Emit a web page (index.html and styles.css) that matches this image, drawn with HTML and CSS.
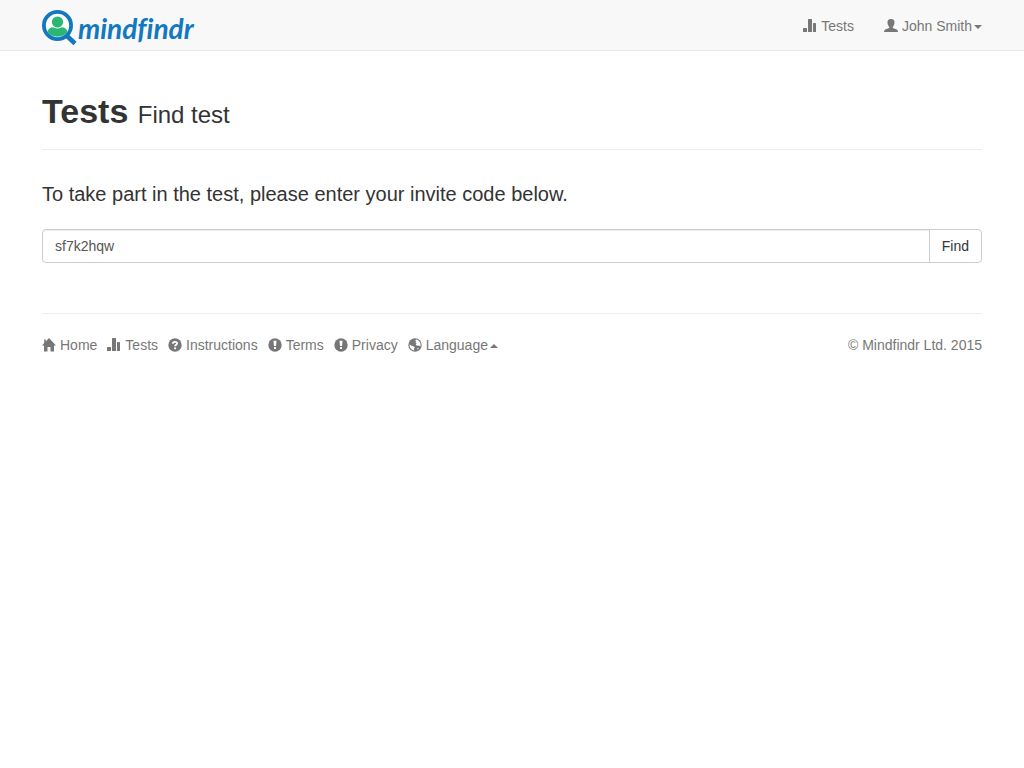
FILE: index.html
```html
<!DOCTYPE html>
<html lang="en">
<head>
<meta charset="utf-8">
<meta name="viewport" content="width=device-width, initial-scale=1">
<title>Mindfindr - Find test</title>
<link rel="stylesheet" href="styles.css">
</head>
<body>
<svg class="sprite" aria-hidden="true">
    <symbol id="icon-stats" viewBox="0 0 14 14">
        <rect x="0" y="9" width="4" height="4" rx=".5"/>
        <rect x="5" y="0" width="4" height="13" rx=".5"/>
        <rect x="10" y="4" width="3" height="9" rx=".5"/>
    </symbol>
    <symbol id="icon-user" viewBox="0 0 14 14">
        <path d="M7 0C4.3 0 3.3 1.5 3.5 3.8C3.6 5.5 4.2 6.9 5.2 7.8V9L1.2 10.4Q0 11 0 13H14Q14 11 12.8 10.4L8.8 9V7.8C9.8 6.9 10.4 5.5 10.5 3.8C10.7 1.5 9.7 0 7 0Z"/>
    </symbol>
    <symbol id="icon-home" viewBox="0 0 14 14">
        <path d="M7 0L14 7.4H12V13.5H8.5V9H5.5V13.5H2V7.4H0L2.2 5V1.5H3.8V3.4Z"/>
    </symbol>
    <symbol id="icon-question" viewBox="0 0 14 14">
        <circle cx="7" cy="7" r="6.7"/>
        <path d="M4.9 5.7C4.9 3.2 9.1 3.2 9.1 5.4C9.1 6.7 7.1 6.7 7.1 8.3" fill="none" stroke="#fff" stroke-width="1.8"/>
        <rect x="6.1" y="9.4" width="2" height="1.8" fill="#fff"/>
    </symbol>
    <symbol id="icon-exclamation" viewBox="0 0 14 14">
        <circle cx="7" cy="7" r="6.7"/>
        <path d="M5.5 2.8H8.5L8 7.9H6Z" fill="#fff"/>
        <rect x="6" y="9" width="2" height="2" fill="#fff"/>
    </symbol>
    <symbol id="icon-globe" viewBox="0 0 14 14">
        <circle cx="7" cy="7" r="6.7"/>
        <path d="M8.2 1.5L7.2 2.6L8.2 3.4L7.4 4.6L8.6 5.5L7.7 6.8L9.2 7.7L11 7.4L12.5 8.4C13.1 5 11.3 2.2 8.2 1.5Z" fill="#fff"/>
        <path d="M1.5 6.6L3.4 7.8L5.8 8.4L6.8 9.6L5.9 10.7L6.2 12.6C3.4 12.1 1.4 9.8 1.5 6.6Z" fill="#fff"/>
        <path d="M9.2 10.4L11.2 9.8L9.4 11.8Z" fill="#fff"/>
    </symbol>
</svg>

<nav class="navbar">
    <div class="container navbar-inner">
        <a class="brand" href="#">
            <svg class="brand-mark" viewBox="0 0 36 36" aria-hidden="true">
                <path d="M25 26L33 33.5" stroke="#1278bf" stroke-width="4.5"/>
                <circle cx="15.5" cy="15.5" r="13.6" fill="#fff" stroke="#1278bf" stroke-width="3.8"/>
                <circle cx="15.5" cy="12" r="5.6" fill="#2bb673"/>
                <path d="M5.5 22C5.8 18.7 8.5 17.4 11.3 17.2Q15.5 20 19.7 17.2C22.5 17.4 25.2 18.7 25.5 22Q22 26.5 15.5 26.7Q9 26.5 5.5 22Z" fill="#2bb673"/>
            </svg>
            <span class="brand-name">mindfindr</span>
        </a>
        <div class="navbar-links">
            <a class="icon-link" href="#"><svg class="icon"><use href="#icon-stats"/></svg>Tests</a>
            <a class="icon-link" href="#"><svg class="icon"><use href="#icon-user"/></svg><span>John Smith<b class="caret"></b></span></a>
        </div>
    </div>
</nav>

<main class="container">
    <header class="page-header">
        <h1>Tests <small>Find test</small></h1>
    </header>
    <form class="find-form">
        <label class="lead" for="code">To take part in the test, please enter your invite code below.</label>
        <div class="input-group">
            <input type="text" id="code" name="code" value="sf7k2hqw">
            <button type="submit">Find</button>
        </div>
    </form>
</main>

<footer class="container">
    <div class="footer-inner">
        <div class="footer-links">
            <a class="icon-link" href="#"><svg class="icon"><use href="#icon-home"/></svg>Home</a>
            <a class="icon-link" href="#"><svg class="icon"><use href="#icon-stats"/></svg>Tests</a>
            <a class="icon-link" href="#"><svg class="icon"><use href="#icon-question"/></svg>Instructions</a>
            <a class="icon-link" href="#"><svg class="icon"><use href="#icon-exclamation"/></svg>Terms</a>
            <a class="icon-link" href="#"><svg class="icon"><use href="#icon-exclamation"/></svg>Privacy</a>
            <a class="icon-link" href="#"><svg class="icon"><use href="#icon-globe"/></svg><span>Language<b class="caret caret-up"></b></span></a>
        </div>
        <span>&copy; Mindfindr Ltd. 2015</span>
    </div>
</footer>
</body>
</html>
```

FILE: styles.css
```css
* {
	box-sizing: border-box;
}
body {
	margin: 0;
	background: #fff;
	color: #333;
	font: 14px/20px "Liberation Sans", Arial, sans-serif;
}
.sprite {
	display: none;
}
.container {
	max-width: 970px;
	margin: 0 auto;
	padding: 0 15px;
}

/* top bar */
.navbar {
	background: #f8f8f8;
	border-bottom: 1px solid #e7e7e7;
}
.navbar-inner {
	display: flex;
	justify-content: space-between;
	align-items: center;
	min-height: 50px;
}
.navbar-links {
	display: flex;
	gap: 30px;
	padding-top: 2px;
}
.brand {
	display: flex;
	align-items: center;
	color: #1278bf;
	text-decoration: none;
	padding-top: 5px;
}
.brand-mark {
	width: 36px;
	height: 36px;
}
.brand-name {
	font: italic bold 28px/36px Lato, sans-serif;
	font-variant-ligatures: none;
}
.icon-link {
	display: flex;
	align-items: center;
	gap: 4px;
	color: #777;
	text-decoration: none;
}
.icon {
	width: 14px;
	height: 14px;
	fill: currentColor;
}
.caret {
	display: inline-block;
	margin-left: 2px;
	vertical-align: middle;
	border-top: 4px solid;
	border-left: 4px solid transparent;
	border-right: 4px solid transparent;
}
.caret-up {
	border-top: 0;
	border-bottom: 4px solid;
}

/* content */
.page-header {
	margin: 40px 0 30px;
	padding-bottom: 18px;
	border-bottom: 1px solid #eee;
}
h1 {
	margin: 0;
	font-size: 34px;
	line-height: 40px;
}
h1 small {
	font-size: 24px;
	font-weight: normal;
	line-height: 1;
}
.lead {
	display: block;
	margin-bottom: 20px;
	font-size: 20px;
	line-height: 29px;
}
.input-group {
	display: flex;
}
.input-group input {
	flex: 1;
	min-width: 0;
	height: 34px;
	padding: 6px 12px;
	border: 1px solid #ccc;
	border-radius: 4px 0 0 4px;
	box-shadow: inset 0 1px 1px rgba(0,0,0,0.075);
	color: #555;
	font: inherit;
}
.input-group button {
	margin-left: -1px;
	padding: 6px 12px;
	border: 1px solid #ccc;
	border-radius: 0 4px 4px 0;
	background: #fff;
	color: #333;
	font: inherit;
}

/* footer */
.footer-inner {
	display: flex;
	justify-content: space-between;
	flex-wrap: wrap;
	margin-top: 50px;
	padding-top: 21px;
	border-top: 1px solid #eee;
	color: #777;
}
.footer-links {
	display: flex;
	flex-wrap: wrap;
	gap: 10px;
}
```
